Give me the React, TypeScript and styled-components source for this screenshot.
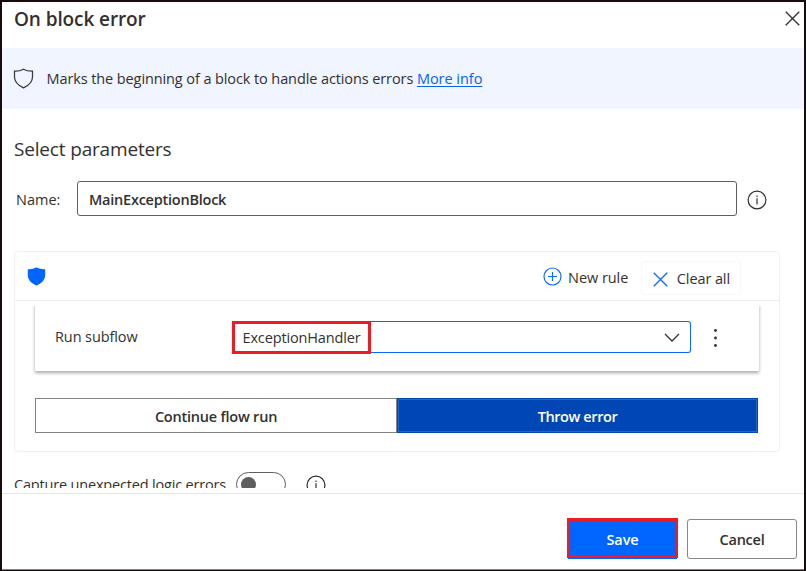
import React from 'react';
import styled, { createGlobalStyle } from 'styled-components';

const Global = createGlobalStyle`
  *, *::before, *::after { box-sizing: border-box; }
  body { margin: 0; background: #fff; }
  button { padding: 0; font: inherit; color: inherit; background: none; border: 0; }
  svg { display: block; flex: none; }
`;

const Dialog = styled.div`
  width: 806px;
  height: 571px;
  display: flex;
  flex-direction: column;
  overflow: hidden;
  background: #fff;
  border: 2px solid #180a0d;
  border-bottom-width: 1px;
  color: #323130;
  font-family: 'Open Sans', 'Noto Sans', sans-serif;
  font-size: 14.5px;
  line-height: 20px;
  white-space: nowrap;
`;

const Text = styled.span<{ $spacing?: number; $strong?: boolean }>`
  letter-spacing: ${p => p.$spacing ?? -0.1}px;
  font-weight: ${p => (p.$strong ? 600 : 400)};
`;

const Header = styled.header`
  flex: none;
  height: 46px;
  display: flex;
  align-items: flex-start;
  justify-content: space-between;
  padding: 5px 4px 0 12px;
`;

const Title = styled.h1`
  margin: 0;
  font-size: 19px;
  line-height: 24px;
  font-weight: 600;
  letter-spacing: -0.1px;
`;

const CloseButton = styled.button`
  margin-top: 4px;
`;

const InfoBand = styled.div`
  flex: none;
  height: 61px;
  display: flex;
  align-items: center;
  gap: 12.5px;
  padding-left: 11px;
  background: #f0f5ff;
`;

const Link = styled.a`
  color: #0b62f0;
  text-decoration: underline;
  text-underline-offset: 2px;
  text-decoration-thickness: 1px;
  letter-spacing: -0.03px;
`;

const Body = styled.main`
  flex: none;
  height: 379px;
  overflow: hidden;
  padding: 28px 24px 0 12px;
`;

const SectionTitle = styled.h2`
  margin: 0;
  font-size: 19px;
  line-height: 24px;
  font-weight: 400;
  letter-spacing: -0.17px;
`;

const NameRow = styled.div`
  display: flex;
  align-items: center;
  height: 35px;
  margin-top: 20px;
`;

const NameLabel = styled.label`
  width: 63px;
  padding: 2px 0 0 2px;
`;

const NameInput = styled.div`
  width: 660px;
  height: 35px;
  display: flex;
  align-items: center;
  margin-right: 9.5px;
  padding: 2px 0 0 11px;
  border: 1px solid #605e5c;
  border-radius: 3px;
`;

const InfoButton = styled.button<{ $lowered?: boolean }>`
  padding-top: ${p => (p.$lowered ? 3 : 0)}px;
`;

const RulesPanel = styled.section`
  height: 201px;
  margin-top: 35px;
  border: 1px solid #f1f1f1;
  border-radius: 4px;
`;

const RulesHeader = styled.div`
  height: 49px;
  display: flex;
  align-items: center;
  justify-content: space-between;
  padding: 0 38px 0 11.5px;
  border-bottom: 1px solid #ededed;
`;

const RulesActions = styled.div`
  display: flex;
  align-items: center;
  gap: 12.5px;
  padding-top: 4px;
`;

const RuleAction = styled.button<{ $boxed?: boolean }>`
  display: flex;
  align-items: center;
  height: 34px;
  gap: ${p => (p.$boxed ? 9 : 6)}px;
  padding: ${p => (p.$boxed ? '2px 10px 0 11px' : '0')};
  border: ${p => (p.$boxed ? '1px solid #f8f8f8' : '0')};
  border-radius: 3px;
`;

const RaisedIcon = styled.span`
  padding-bottom: 4px;
`;

const RuleCard = styled.div`
  height: 68px;
  display: flex;
  align-items: center;
  margin: 2px 20px 0;
  padding-left: 20px;
  background: #fff;
  box-shadow: 0 2px 3px rgba(0, 0, 0, 0.26), 0 2px 4px rgba(0, 0, 0, 0.1);
  clip-path: inset(3px -8px -8px -8px);
`;

const RuleLabel = styled(Text)`
  width: 177px;
`;

const Dropdown = styled.div`
  width: 459px;
  height: 32px;
  display: flex;
  align-items: center;
  justify-content: space-between;
  padding-right: 10px;
  margin-right: 22px;
  border: 1px solid #0a66ff;
  border-left: 0;
  border-radius: 3px;
`;

const SelectedValue = styled.div`
  flex: none;
  width: 139px;
  height: 33px;
  display: flex;
  align-items: center;
  padding: 1px 0 0 7.5px;
  background: #fff;
  border: 3px solid #ec1c24;
`;

const ChevronBox = styled.span`
  padding-top: 2px;
`;

const MoreButton = styled.button`
  padding-top: 2px;
`;

const Segments = styled.div`
  display: grid;
  grid-template-columns: 362px 361px;
  height: 35px;
  margin: 27px 20px 0;
`;

const Segment = styled.button<{ $active?: boolean }>`
  display: flex;
  align-items: center;
  justify-content: center;
  padding-top: 2px;
  color: ${p => (p.$active ? '#fff' : '#323130')};
  background: ${p => (p.$active ? '#0046b5' : '#fff')};
  border: 1px solid ${p => (p.$active ? '#0046b5' : '#858381')};
  box-shadow: ${p => (p.$active ? 'inset 0 0 0 1px #2664c7' : 'none')};
`;

const CaptureRow = styled.div`
  display: flex;
  align-items: center;
  height: 25px;
  margin-top: 20px;
`;

const Toggle = styled.button`
  width: 50px;
  height: 25px;
  display: flex;
  align-items: center;
  margin: 0 20px 0 10px;
  padding-left: 4px;
  border: 1px solid #605e5c;
  border-radius: 13px;
`;

const Knob = styled.span`
  width: 15px;
  height: 15px;
  border-radius: 50%;
  background: #605e5c;
`;

const Footer = styled.footer`
  flex: 1;
  display: flex;
  justify-content: flex-end;
  align-items: flex-start;
  gap: 9px;
  margin-top: 5px;
  padding: 24px 7px 0 0;
  border-top: 1px solid #e6e6e6;
  border-bottom: 1px solid #858383;
`;

const FooterButton = styled.button<{ $primary?: boolean }>`
  width: ${p => (p.$primary ? 111 : 110)}px;
  height: 40px;
  margin-top: ${p => (p.$primary ? 0 : 1)}px;
  padding-top: ${p => (p.$primary ? 3 : 1)}px;
  display: flex;
  align-items: center;
  justify-content: center;
  color: ${p => (p.$primary ? '#fff' : '#323130')};
  background: ${p => (p.$primary ? '#0066ff' : '#fff')};
  border: ${p => (p.$primary ? '3px solid #ec1c24' : '1px solid #8a8886')};
  border-radius: ${p => (p.$primary ? 0 : 3)}px;
  box-shadow: ${p => (p.$primary ? '0 2px 0 -1px #0066ff' : 'none')};
`;

const Cross = ({ size, color }: { size: number; color: string }) => (
  <svg width={size} height={size} viewBox="0 0 14 14" fill="none" stroke={color} strokeWidth="1.25">
    <path d="M.7.7l12.6 12.6M13.3.7L.7 13.3" />
  </svg>
);

const Shield = ({ filled }: { filled?: boolean }) => (
  <svg
    width={filled ? 19 : 21}
    height={filled ? 19 : 21}
    viewBox="0 0 21 21"
    fill={filled ? '#0066ff' : 'none'}
    stroke={filled ? '#0066ff' : '#3b3a39'}
    strokeWidth="1.25"
    strokeLinejoin="miter"
  >
    <path d="M10.5 1.2C8 2.7 4.7 3.3 1.5 3.2V9c0 4.8 3.7 8.4 9 10.9 5.3-2.5 9-6.1 9-10.9V3.2c-3.2.1-6.5-.5-9-2z" />
  </svg>
);

const InfoIcon = () => (
  <svg width="20" height="20" viewBox="0 0 20 20" fill="none" stroke="#323130">
    <circle cx="10" cy="10" r="8.9" strokeWidth="1.2" />
    <path d="M10 8.2V14.5M10 5.5V7" strokeWidth="1.2" />
  </svg>
);

const AddIcon = () => (
  <svg width="19" height="19" viewBox="0 0 19 19" fill="none" stroke="#0f6aff" strokeWidth="1.2">
    <circle cx="9.5" cy="9.5" r="8.5" />
    <path d="M9.5 5v9M5 9.5h9" />
  </svg>
);

const Chevron = () => (
  <svg width="16" height="10" viewBox="0 0 16 10" fill="none" stroke="#323130" strokeWidth="1.3">
    <path d="M1 1l7 7 7-7" />
  </svg>
);

const MoreIcon = () => (
  <svg width="5" height="20" viewBox="0 0 5 20" fill="#323130">
    <circle cx="2.5" cy="2.5" r="1.4" />
    <circle cx="2.5" cy="10" r="1.4" />
    <circle cx="2.5" cy="17.5" r="1.4" />
  </svg>
);

export default function App() {
  return (
    <>
      <Global />
      <Dialog>
        <Header>
          <Title>On block error</Title>
          <CloseButton aria-label="Close"><Cross size={15} color="#323130" /></CloseButton>
        </Header>
        <InfoBand>
          <Shield />
          <Text>Marks the beginning of a block to handle actions errors <Link>More info</Link></Text>
        </InfoBand>
        <Body>
          <SectionTitle>Select parameters</SectionTitle>
          <NameRow>
            <NameLabel>Name:</NameLabel>
            <NameInput><Text $strong $spacing={-0.24}>MainExceptionBlock</Text></NameInput>
            <InfoButton $lowered aria-label="About the name"><InfoIcon /></InfoButton>
          </NameRow>
          <RulesPanel>
            <RulesHeader>
              <Shield filled />
              <RulesActions>
                <RuleAction>
                  <RaisedIcon><AddIcon /></RaisedIcon>
                  <Text $spacing={-0.05}>New rule</Text>
                </RuleAction>
                <RuleAction $boxed>
                  <Cross size={15} color="#0f6aff" />
                  <Text>Clear all</Text>
                </RuleAction>
              </RulesActions>
            </RulesHeader>
            <RuleCard>
              <RuleLabel>Run subflow</RuleLabel>
              <Dropdown>
                <SelectedValue><Text $spacing={-0.14}>ExceptionHandler</Text></SelectedValue>
                <ChevronBox><Chevron /></ChevronBox>
              </Dropdown>
              <MoreButton aria-label="More actions"><MoreIcon /></MoreButton>
            </RuleCard>
            <Segments>
              <Segment><Text $strong $spacing={-0.22}>Continue flow run</Text></Segment>
              <Segment $active><Text $strong $spacing={-0.4}>Throw error</Text></Segment>
            </Segments>
          </RulesPanel>
          <CaptureRow>
            <Text $spacing={-0.18}>Capture unexpected logic errors</Text>
            <Toggle aria-label="Capture unexpected logic errors"><Knob /></Toggle>
            <InfoButton aria-label="About unexpected logic errors"><InfoIcon /></InfoButton>
          </CaptureRow>
        </Body>
        <Footer>
          <FooterButton $primary><Text $strong $spacing={-0.13}>Save</Text></FooterButton>
          <FooterButton><Text $strong $spacing={-0.25}>Cancel</Text></FooterButton>
        </Footer>
      </Dialog>
    </>
  );
}
